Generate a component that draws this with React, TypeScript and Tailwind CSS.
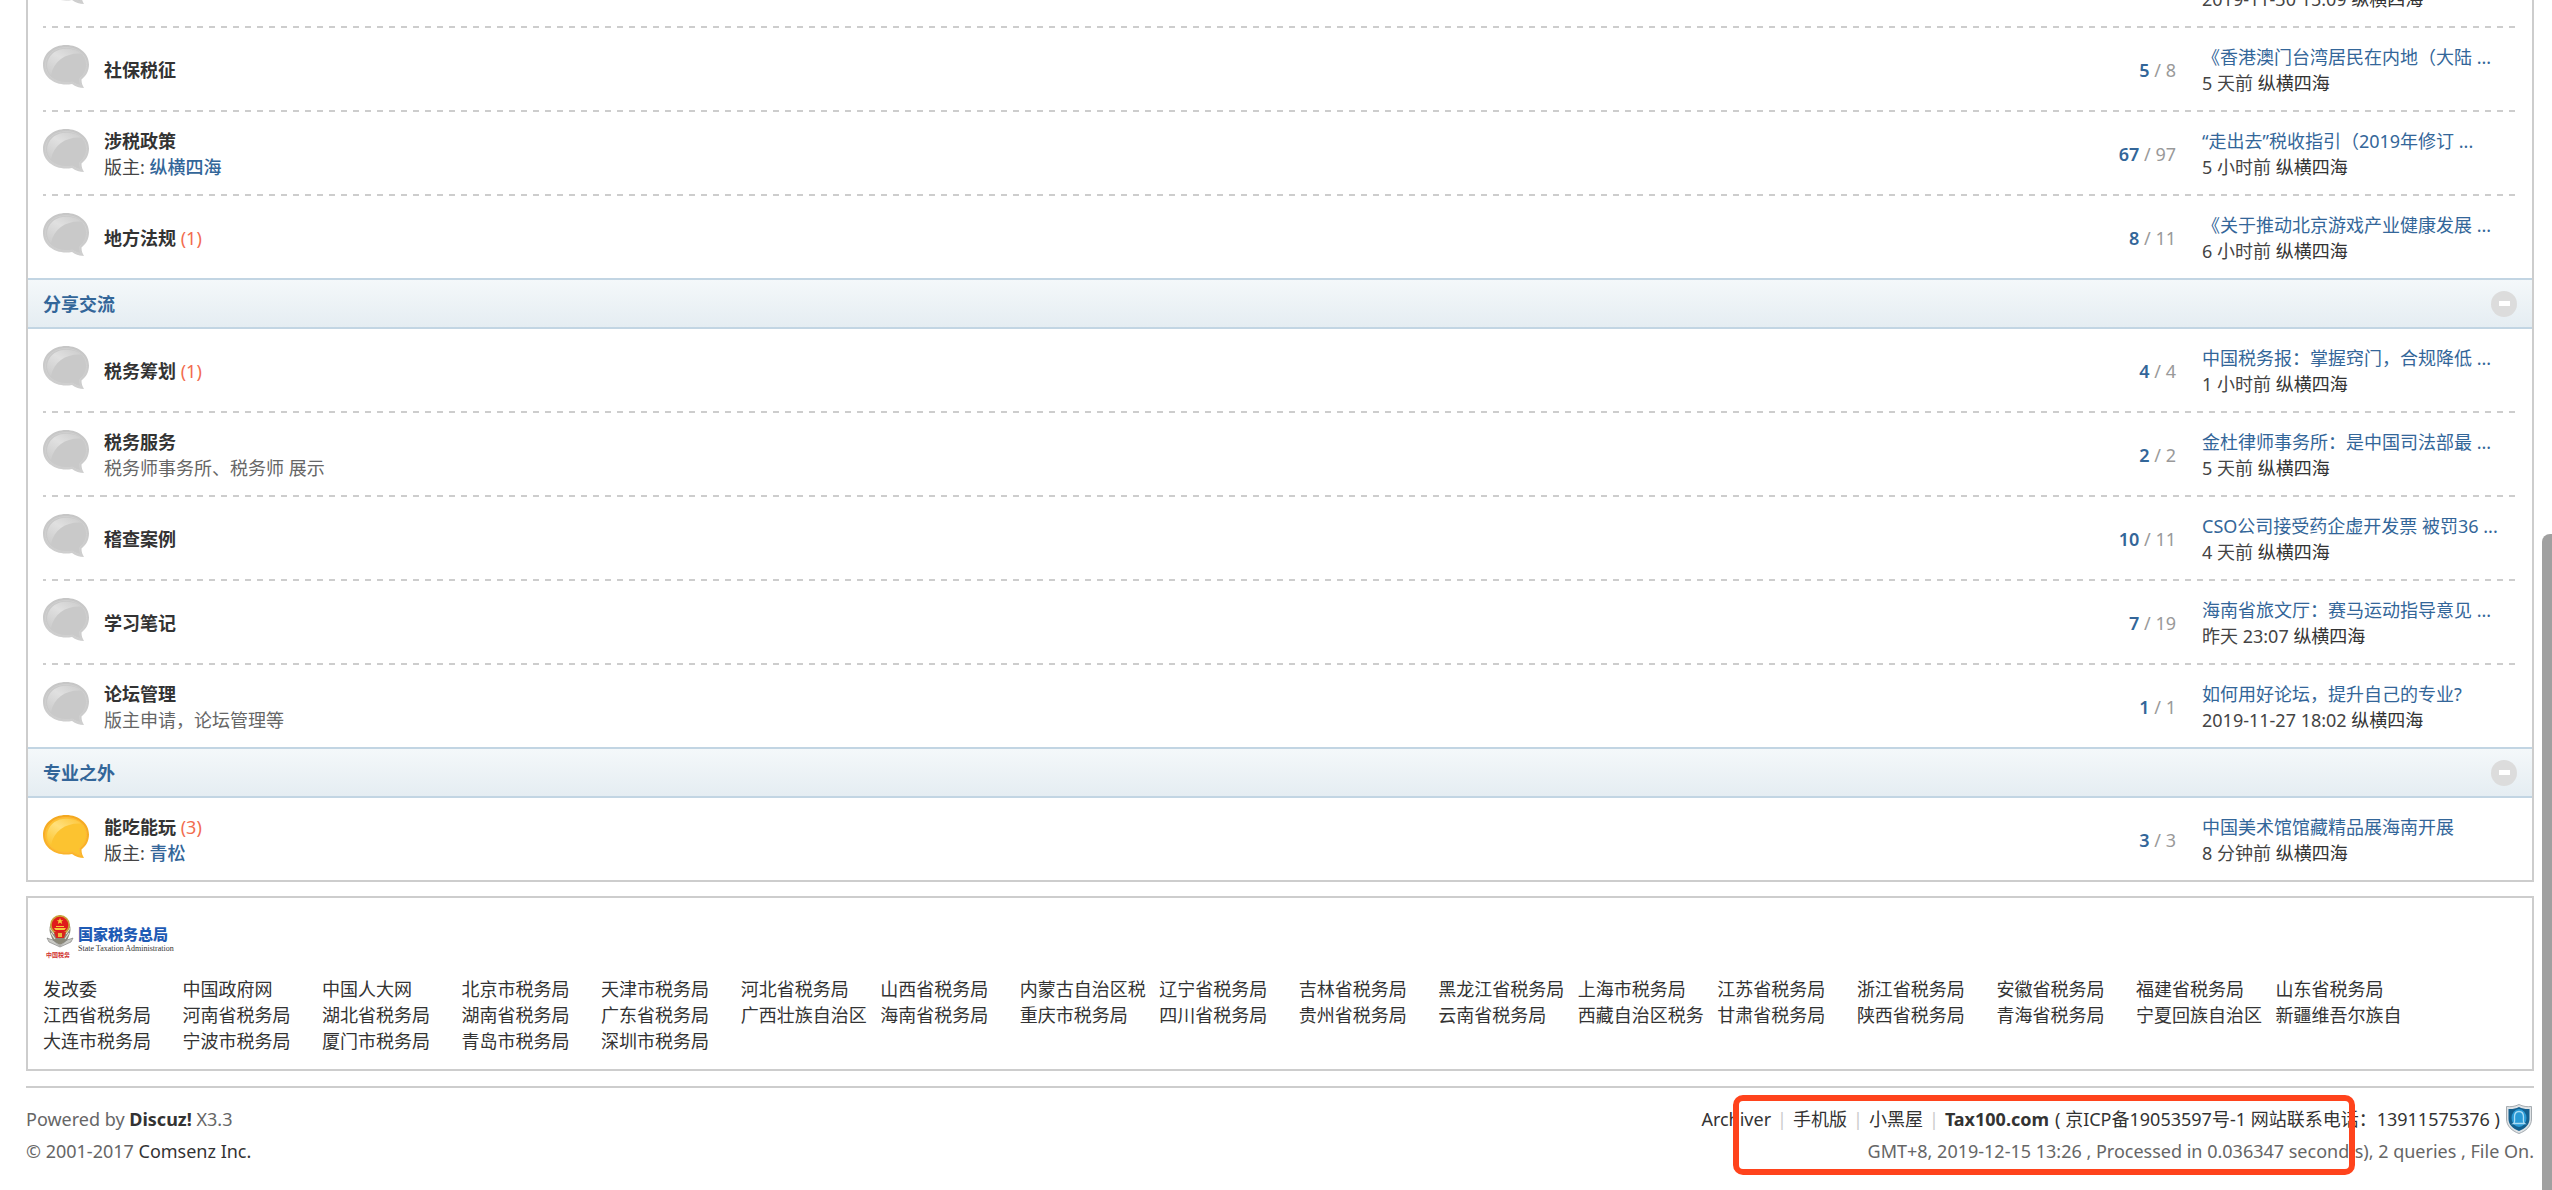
import { useEffect } from "react";

type Forum = {
	name: string;
	today?: number;
	moderator?: string;
	desc?: string;
	threads: number;
	posts: number;
	last_title: string;
	last_time: string;
	is_new?: boolean;
};

let policies: Forum[] = [
	{ name: "社保税征", threads: 5, posts: 8, last_title: "《香港澳门台湾居民在内地（大陆 ...", last_time: "5 天前" },
	{ name: "涉税政策", moderator: "纵横四海", threads: 67, posts: 97, last_title: "“走出去”税收指引（2019年修订 ...", last_time: "5 小时前" },
	{ name: "地方法规", today: 1, threads: 8, posts: 11, last_title: "《关于推动北京游戏产业健康发展 ...", last_time: "6 小时前" },
];

let sharing: Forum[] = [
	{ name: "税务筹划", today: 1, threads: 4, posts: 4, last_title: "中国税务报：掌握窍门，合规降低 ...", last_time: "1 小时前" },
	{ name: "税务服务", desc: "税务师事务所、税务师 展示", threads: 2, posts: 2, last_title: "金杜律师事务所：是中国司法部最 ...", last_time: "5 天前" },
	{ name: "稽查案例", threads: 10, posts: 11, last_title: "CSO公司接受药企虚开发票 被罚36 ...", last_time: "4 天前" },
	{ name: "学习笔记", threads: 7, posts: 19, last_title: "海南省旅文厅：赛马运动指导意见 ...", last_time: "昨天 23:07" },
	{ name: "论坛管理", desc: "版主申请，论坛管理等", threads: 1, posts: 1, last_title: "如何用好论坛，提升自己的专业?", last_time: "2019-11-27 18:02" },
];

let others: Forum[] = [
	{ name: "能吃能玩", today: 3, moderator: "青松", threads: 3, posts: 3, last_title: "中国美术馆馆藏精品展海南开展", last_time: "8 分钟前", is_new: true },
];

// names are cut to seven characters
let links = [
	"发改委", "中国政府网", "中国人大网", "北京市税务局", "天津市税务局", "河北省税务局", "山西省税务局", "内蒙古自治区税", "辽宁省税务局",
	"吉林省税务局", "黑龙江省税务局", "上海市税务局", "江苏省税务局", "浙江省税务局", "安徽省税务局", "福建省税务局", "山东省税务局",
	"江西省税务局", "河南省税务局", "湖北省税务局", "湖南省税务局", "广东省税务局", "广西壮族自治区", "海南省税务局", "重庆市税务局",
	"四川省税务局", "贵州省税务局", "云南省税务局", "西藏自治区税务", "甘肃省税务局", "陕西省税务局", "青海省税务局", "宁夏回族自治区",
	"新疆维吾尔族自", "大连市税务局", "宁波市税务局", "厦门市税务局", "青岛市税务局", "深圳市税务局",
];

function Bubble({ is_new }: { is_new?: boolean }) {
	const id = is_new ? "new" : "old";
	return (
		<svg width="46" height="44" viewBox="0 0 46 44" className="block">
			<defs>
				<linearGradient id={"rim-" + id} x1="0" y1="0" x2="0" y2="1">
					<stop offset="0" stopColor={is_new ? "#f3a81f" : "#c6c6c6"} />
					<stop offset="1" stopColor={is_new ? "#fbb62c" : "#cfcfcf"} />
				</linearGradient>
				<linearGradient id={"shine-" + id} x1="0" y1="1" x2="0.8" y2="0">
					<stop offset="0" stopColor={is_new ? "#fcc42c" : "#cbcbcb"} />
					<stop offset="0.6" stopColor={is_new ? "#ffe07c" : "#e0e0e0"} />
					<stop offset="1" stopColor={is_new ? "#fdca45" : "#d0d0d0"} />
				</linearGradient>
			</defs>
			<path d="M23 0C36 0 46 8.500 46 19.500C46 26 43 31 38.500 34.500C38.500 38 39.500 40.500 41 43C36.500 43 32.500 41.500 29 39C27 39.400 25 39.500 23 39.500C10 39.500 0 31 0 20C0 8.500 10 0 23 0Z" fill={"url(#rim-" + id + ")"} />
			<path d="M23 2.500C34.500 2.500 43.500 9.500 43.500 19.500C43.500 25.500 41 30 36.500 33.500C36.500 36.500 37 38.500 37.800 40.500C34.500 39.800 32 38.500 29.500 37C27.500 37.300 25.500 37.500 23 37.500C11.500 37.500 2.500 30 2.500 20C2.500 9.500 11.500 2.500 23 2.500Z" fill={is_new ? "#fcc330" : "#c9c9c9"} stroke={is_new ? "#ffb93a" : "#d0d0d0"} />
			<path d="M8 30C4.500 26.500 3.500 22 4.500 17C7 8 15 3.500 24 3.800C30 4 35 5.500 38 8.500C24 7.500 11 15 8 30Z" fill={"url(#shine-" + id + ")"} />
		</svg>
	);
}

function ForumTable({ forums, continued }: { forums: Forum[], continued?: boolean }) {
	return (
		<div className="px-[15px]">
			<table className="w-full table-fixed border-separate border-spacing-0">
				<colgroup>
					<col className="w-[61px]" />
					<col />
					<col className="w-[180px]" />
					<col className="w-[341px]" />
				</colgroup>
				<tbody>
					{forums.map((forum, index) => {
						const ruled = index > 0 || continued;
						return (
							<tr
								key={index}
								className={ruled ? "*:border-t-2 *:border-transparent *:bg-[repeating-linear-gradient(90deg,#cdcdcd_0_3px,transparent_3px_9px,#cdcdcd_9px_12px)] *:bg-[length:100%_2px] *:bg-origin-border *:bg-no-repeat" : ""}
							>
								<td className="p-0 pt-[17px] align-top">
									<Bubble is_new={forum.is_new} />
								</td>
								<td className="p-0 pt-[16px] pb-[14px] align-middle">
									<h2>
										<a href="#" className="font-bold text-[#333]">{forum.name}&nbsp;</a>
										{forum.today && <em className="text-[#f26c4f] not-italic">({forum.today})</em>}
									</h2>
									{forum.desc && <p className="text-[#666]">{forum.desc}</p>}
									{forum.moderator && <p>版主: <a href="#" className="font-medium text-[#369]">{forum.moderator}</a></p>}
								</td>
								<td className="p-0 pt-[2px] text-right align-middle text-[#999]">
									<span className="font-semibold text-[#369]">{forum.threads}</span> / {forum.posts}
								</td>
								<td className="p-0 pt-[16px] pb-[14px] pl-[26px] align-middle whitespace-nowrap">
									<a href="#" className="block text-[#369]">{forum.last_title}</a>
									<cite className="block not-italic">{forum.last_time} <a href="#" className="text-[#333]">纵横四海</a></cite>
								</td>
							</tr>
						);
					})}
				</tbody>
			</table>
		</div>
	);
}

function SectionHead({ title }: { title: string }) {
	return (
		<div className="flex h-[51px] items-center justify-between border-y-2 border-[#c2d5e3] bg-linear-to-b from-[#f4f8fa] to-[#e5edf2] px-[15px]">
			<h2><a href="#" className="font-bold text-[#369]">{title}</a></h2>
			<button type="button" aria-label="收起" className="flex size-[26px] items-center justify-center rounded-full bg-[#dcdcdc]">
				<span className="h-[5px] w-[11px] bg-white" />
			</button>
		</div>
	);
}

function TaxLogo() {
	return (
		<a href="#" className="flex h-[46px] w-[132px] items-center gap-[4px] pl-[3px]">
			<svg width="28" height="46" viewBox="0 0 28 46" className="shrink-0">
				<path d="M14 2C6 5 2 13 4 20L7 28L14 32L21 28L24 20C26 13 22 5 14 2Z" fill="#8b8878" />
				<path d="M1 25L7 27L14 33L21 27L27 25L25 29L14 34L3 29Z" fill="#c9c9c4" stroke="#777" strokeWidth="0.6" />
				<path d="M5 20L9 26M23 20L19 26M4 15L8 21M24 15L20 21" stroke="#e6e3d3" strokeWidth="1.2" />
				<circle cx="14" cy="12" r="10" fill="#c8a33a" />
				<circle cx="14" cy="12" r="8.300" fill="#e01b1b" />
				<path d="M14 5L15 7.200H17.300L15.500 8.600L16.200 11L14 9.600L11.800 11L12.500 8.600L10.700 7.200H13Z" fill="#f6d23c" />
				<path d="M8 15H20L18.500 17H9.500ZM10 13H18V14H10Z" fill="#f6c93c" />
				<path d="M8 19H20L18 25H10Z" fill="#d7261e" />
				<path d="M12 20H16V24H12Z" fill="#e8b93a" />
			</svg>
			<span className="flex flex-col pt-[8px] whitespace-nowrap">
				<span className="text-[15px] leading-[18px] font-black text-[#1f5bb5]">国家税务总局</span>
				<span className="font-['Liberation_Serif',serif] text-[8px] leading-[12px] text-[#333]">State Taxation Administration</span>
			</span>
			<span className="absolute mt-[38px] text-[6px] leading-[8px] font-bold text-[#d0312d]">中国税务</span>
		</a>
	);
}

function Shield() {
	return (
		<svg width="28" height="30" viewBox="0 0 28 30" className="shrink-0">
			<path d="M13 0.500C17 2.500 21 3 25.500 2.500V15C25.500 22 20 27 13 29.500C6 27 0.500 22 0.500 15V2.500C5 3 9 2.500 13 0.500Z" fill="#dfe3e6" stroke="#a5abb0" />
			<path d="M13 3C16.500 4.800 20 5.300 23.500 5V15C23.500 20.500 19 24.800 13 27C7 24.800 2.500 20.500 2.500 15V5C6 5.300 9.500 4.800 13 3Z" fill="#14608f" />
			<ellipse cx="13" cy="14" rx="7.500" ry="9" fill="#2a9ad6" />
			<path d="M7.500 19.500H18.500C16.800 18.500 17.500 16 17.500 13C17.500 9.500 15.500 7.500 13 7.500C10.500 7.500 8.500 9.500 8.500 13C8.500 16 9.200 18.500 7.500 19.500Z" fill="none" stroke="#a9dcf5" strokeWidth="1.300" />
		</svg>
	);
}

function Divider() {
	return <span className="mx-[6px] text-[#ccc]">|</span>;
}

function App() {
	useEffect(() => {
		document.title = 'Tax100.com';
	}, []);

	return (
		<div className="relative min-h-screen overflow-hidden bg-white pr-[18px] pl-[26px] font-['Noto_Sans','Noto_Sans_CJK_SC',sans-serif] text-[18px] leading-[26px] text-[#444] [text-spacing-trim:space-all]">
			<main className="border-x-2 border-b-2 border-[#cdcdcd]">
				{/* tail of the row scrolled off the top */}
				<div className="flex h-[26px] items-end justify-between overflow-hidden px-[15px]">
					<div className="pb-[21px]"><Bubble /></div>
					<p className="w-[315px] pb-[14px]">2019-11-30 15:09 <a href="#" className="text-[#333]">纵横四海</a></p>
				</div>
				<ForumTable forums={policies} continued />
				<SectionHead title="分享交流" />
				<ForumTable forums={sharing} />
				<SectionHead title="专业之外" />
				<ForumTable forums={others} />
			</main>

			<section className="mt-[14px] border-2 border-[#cdcdcd] p-[15px]">
				<TaxLogo />
				<ul className="mt-[17px] grid grid-cols-17 pr-[102px]">
					{links.map((link, index) => {
						return (
							<li key={index} className="whitespace-nowrap">
								<a href="#" className="text-[#333]">{link}</a>
							</li>
						);
					})}
				</ul>
			</section>

			<footer className="mt-[15px] flex justify-between border-t-2 border-[#cdcdcd] pt-[15px] text-[#666]">
				<div>
					<p className="leading-[32px]">Powered by <a href="#" className="font-bold text-[#333]">Discuz!</a> <em className="not-italic">X3.3</em></p>
					<p className="leading-[32px]">© 2001-2017 <a href="#" className="text-[#333]">Comsenz Inc.</a></p>
				</div>
				<div className="text-right">
					<p className="flex items-center justify-end leading-[32px] text-[#333]">
						<a href="#">Archiver</a><Divider />
						<a href="#">手机版</a><Divider />
						<a href="#">小黑屋</a><Divider />
						<a href="#" className="font-bold">Tax100.com</a>
						<span className="mx-[6px]">( <a href="#">京ICP备19053597号-1 网站联系电话：13911575376</a> )</span>
						<Shield />
					</p>
					<p className="leading-[32px]">GMT+8, 2019-12-15 13:26 , Processed in 0.036347 second(s), 2 queries , File On.</p>
				</div>
			</footer>

			<div className="absolute top-[1095px] right-[197px] h-[80px] w-[622px] rounded-[10px] border-6 border-[#ff431c]" />
			<div className="absolute top-[534px] right-0 bottom-0 w-[10px] rounded-tl-[8px] bg-[#a0a0a0]" />
		</div>
	)
}

export default App;
